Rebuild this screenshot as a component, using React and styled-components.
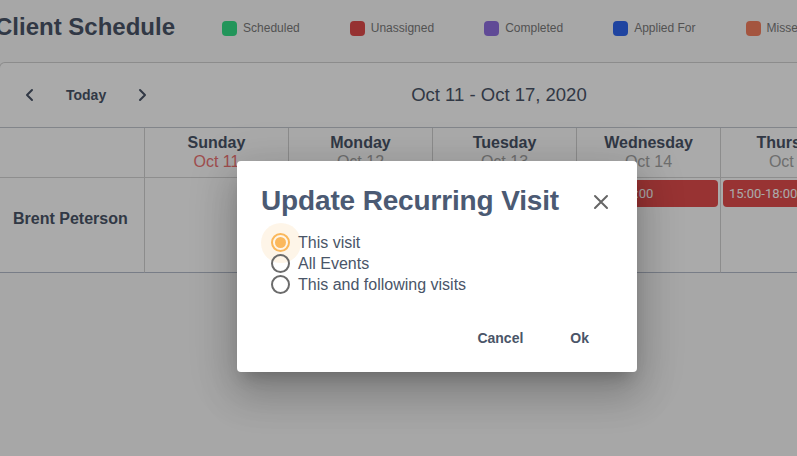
import React from "react";
import styled, { createGlobalStyle } from "styled-components";

const GlobalStyle = createGlobalStyle`
  html, body {
    margin: 0;
    padding: 0;
    overflow: hidden;
  }
  body {
    font-family: "Liberation Sans", Arial, sans-serif;
  }
`;

const legend = [
  { label: "Scheduled", color: "#34e087" },
  { label: "Unassigned", color: "#e24c4c" },
  { label: "Completed", color: "#9170e2" },
  { label: "Applied For", color: "#2f66f0" },
  { label: "Missed", color: "#f7805f" },
];

const days = [
  { name: "Sunday", date: "Oct 11", today: true },
  { name: "Monday", date: "Oct 12" },
  { name: "Tuesday", date: "Oct 13" },
  { name: "Wednesday", date: "Oct 14", event: "15:00-18:00" },
  { name: "Thursday", date: "Oct 15", event: "15:00-18:00" },
];

const options = ["This visit", "All Events", "This and following visits"];

const App = () => {
  return (
    <>
      <GlobalStyle />
      <Page>
        <Header>
          <Title>Client Schedule</Title>
          <Legend>
            {legend.map((item) => (
              <LegendItem key={item.label}>
                <Swatch color={item.color} />
                <LegendLabel>{item.label}</LegendLabel>
              </LegendItem>
            ))}
          </Legend>
        </Header>

        <Panel>
          <Toolbar>
            <Nav>
              <IconButton>
                <svg width="14" height="14" viewBox="0 0 14 14">
                  <polyline points="9,2 4,7 9,12" fill="none" stroke="#4a5568" strokeWidth="2" strokeLinecap="round" strokeLinejoin="round" />
                </svg>
              </IconButton>
              <TodayButton>Today</TodayButton>
              <IconButton>
                <svg width="14" height="14" viewBox="0 0 14 14">
                  <polyline points="5,2 10,7 5,12" fill="none" stroke="#4a5568" strokeWidth="2" strokeLinecap="round" strokeLinejoin="round" />
                </svg>
              </IconButton>
            </Nav>
            <Range>Oct 11 - Oct 17, 2020</Range>
          </Toolbar>

          <Grid>
            <HeadCell />
            {days.map((d) => (
              <HeadCell key={d.name} day>
                <DayName>{d.name}</DayName>
                <DayDate today={d.today}>{d.date}</DayDate>
              </HeadCell>
            ))}
            <NameCell>Brent Peterson</NameCell>
            {days.map((d) => (
              <BodyCell key={d.name}>
                {d.event && <Event>{d.event}</Event>}
              </BodyCell>
            ))}
          </Grid>
        </Panel>

        <Overlay>
          <Dialog>
            <DialogHeader>
              <DialogTitle>Update Recurring Visit</DialogTitle>
              <CloseButton>
                <svg width="16" height="16" viewBox="0 0 16 16">
                  <path d="M2 2 L14 14 M14 2 L2 14" stroke="#666" strokeWidth="2" strokeLinecap="round" />
                </svg>
              </CloseButton>
            </DialogHeader>
            <Options>
              {options.map((o, i) => (
                <Option key={o}>
                  <Radio checked={i === 0} />
                  <OptionLabel>{o}</OptionLabel>
                </Option>
              ))}
            </Options>
            <Actions>
              <ActionButton>Cancel</ActionButton>
              <ActionButton>Ok</ActionButton>
            </Actions>
          </Dialog>
        </Overlay>
      </Page>
    </>
  );
};

export default App;

const Page = styled.div`
  position: relative;
  width: 797px;
  height: 456px;
  overflow: hidden;
  background: #fbfbfb;
`;

const Header = styled.div`
  display: flex;
  align-items: center;
  height: 54px;
  margin-left: -5px;
  white-space: nowrap;
`;

const Title = styled.h1`
  margin: 0;
  font-size: 24px;
  font-weight: 700;
  color: #4a5568;
`;

const Legend = styled.div`
  display: flex;
  gap: 50px;
  margin-left: 47px;
  padding-top: 2px;
`;

const LegendItem = styled.div`
  display: flex;
  align-items: center;
  gap: 6px;
`;

const Swatch = styled.span`
  width: 15px;
  height: 15px;
  border-radius: 4px;
  background: ${(p) => p.color};
`;

const LegendLabel = styled.span`
  font-size: 12px;
  color: #7c7c7c;
`;

const Panel = styled.div`
  margin: 8px 0 0 -1px;
  width: 900px;
  background: #fff;
  border: 1px solid #d2d2d2;
  border-bottom: none;
  border-radius: 6px 6px 0 0;
`;

const Toolbar = styled.div`
  display: flex;
  align-items: center;
  height: 64px;
  border-bottom: 1px solid #c4c8d0;
`;

const Nav = styled.div`
  display: flex;
  align-items: center;
  padding-left: 23px;
`;

const IconButton = styled.span`
  display: flex;
  width: 14px;
  height: 14px;
`;

const TodayButton = styled.span`
  font-size: 14px;
  font-weight: 700;
  color: #4a5568;
  margin: 0 29px 0 29px;
`;

const Range = styled.div`
  margin-left: 262px;
  font-size: 18.5px;
  color: #4a5568;
`;

const Grid = styled.div`
  display: grid;
  grid-template-columns: 145px repeat(5, 144px);
  grid-template-rows: 50px 95px;
`;

const HeadCell = styled.div`
  display: flex;
  flex-direction: column;
  align-items: center;
  justify-content: center;
  border-bottom: 1px solid #d6d6d6;
  border-right: 1px solid #d2d2d2;
  padding-bottom: 2px;
`;

const DayName = styled.div`
  font-size: 16px;
  font-weight: 700;
  color: #4a5568;
  line-height: 19px;
`;

const DayDate = styled.div`
  font-size: 16px;
  color: ${(p) => (p.today ? "#ef7474" : "#a6a6a6")};
  line-height: 19px;
`;

const NameCell = styled.div`
  display: flex;
  align-items: center;
  padding: 0 0 12px 13px;
  font-size: 16px;
  font-weight: 700;
  color: #4a5568;
  border-right: 1px solid #d2d2d2;
  border-bottom: 1px solid #b4bccb;
`;

const BodyCell = styled.div`
  padding: 2px;
  border-right: 1px solid #d2d2d2;
  border-bottom: 1px solid #b4bccb;
`;

const Event = styled.div`
  height: 27px;
  display: flex;
  align-items: center;
  padding-left: 6px;
  border-radius: 4px;
  background: #e44d4d;
  color: #fff;
  font-family: Roboto, "Liberation Sans", sans-serif;
  font-size: 13px;
`;

const Overlay = styled.div`
  position: absolute;
  inset: 0;
  background: rgba(0, 0, 0, 0.335);
  padding: 161px 0 0 237px;
`;

const Dialog = styled.div`
  width: 400px;
  height: 211px;
  box-sizing: border-box;
  background: #fff;
  border-radius: 4px;
  box-shadow: 0 11px 15px -7px rgba(0, 0, 0, 0.2), 0 24px 38px 3px rgba(0, 0, 0, 0.14),
    0 9px 46px 8px rgba(0, 0, 0, 0.12);
  padding: 23px 28px 0 24px;
  display: flex;
  flex-direction: column;
`;

const DialogHeader = styled.div`
  display: flex;
  align-items: center;
  justify-content: space-between;
`;

const DialogTitle = styled.h2`
  margin: 0;
  font-size: 28px;
  letter-spacing: -0.15px;
  line-height: 34px;
  font-weight: 700;
  color: #4b5a73;
`;

const CloseButton = styled.span`
  display: flex;
  margin-top: 1px;
`;

const Options = styled.div`
  display: flex;
  flex-direction: column;
  margin-top: 14px;
  padding-left: 10px;
`;

const Option = styled.label`
  display: flex;
  align-items: center;
  height: 21px;
  gap: 8px;
`;

const Radio = styled.span`
  position: relative;
  width: 19px;
  height: 19px;
  box-sizing: border-box;
  border-radius: 50%;
  border: 2px solid ${(p) => (p.checked ? "#fbb85c" : "#6b6b6b")};
  &::before {
    content: "";
    display: ${(p) => (p.checked ? "block" : "none")};
    position: absolute;
    left: 50%;
    top: 50%;
    width: 40px;
    height: 40px;
    margin: -20px 0 0 -20px;
    border-radius: 50%;
    background: rgba(251, 184, 92, 0.14);
  }
  &::after {
    content: "";
    display: ${(p) => (p.checked ? "block" : "none")};
    position: absolute;
    left: 2px;
    top: 2px;
    width: 11px;
    height: 11px;
    border-radius: 50%;
    background: #fbb85c;
  }
`;

const OptionLabel = styled.span`
  position: relative;
  font-size: 16px;
  color: #4a5568;
`;

const Actions = styled.div`
  display: flex;
  justify-content: flex-end;
  margin-top: 35px;
  gap: 47px;
  padding-right: 20px;
`;

const ActionButton = styled.span`
  font-size: 14px;
  font-weight: 700;
  color: #4a5568;
`;
